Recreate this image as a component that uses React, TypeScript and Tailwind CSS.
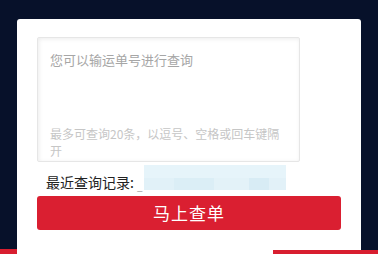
import React from "react";

export default function App() {
  return (
    <div
      className="relative w-[378px] h-[254px] overflow-hidden bg-[#07112a] pt-[19px] pl-[17px]"
      style={{ fontFamily: '"Noto Sans CJK SC", "Microsoft YaHei", sans-serif' }}
    >
      <div className="w-[344px] h-[235px] bg-white rounded-t-[3px] pt-[18px] pl-[20px]">
        <div className="relative w-[263px] h-[125px] border border-[#e6e6e6] rounded-[2px] shadow-[inset_1px_1px_4px_rgba(0,0,0,0.08)] flex flex-col justify-between pt-[13px] pb-[2px] pl-[12px] pr-[12px]">
          <div className="text-[13px] leading-[18px] text-[#a6a6a6]">您可以输运单号进行查询</div>
          <div className="text-[12px] leading-[17px] text-[#c6c6c6] pr-[4px]">
            最多可查询20条，以逗号、空格或回车键隔开
          </div>
        </div>
        <div className="flex items-center h-[34px] pl-[9px]">
          <span className="text-[14px] leading-[18px] text-[#222] mt-[6px]">最近查询记录:</span>
          <span className="text-[10px] text-[#999] mt-[12px] ml-[3px]">_</span>
          <div className="self-start mt-[3px] ml-[1px] w-[142px] h-[25px] blur-[0.6px] flex flex-col">
            <div className="flex-1 bg-[#e6f4fa]" />
            <div className="h-[12px] flex">
              <div className="w-[30px] bg-[#e1f1f8]" />
              <div className="w-[40px] bg-[#dbeef6]" />
              <div className="w-[35px] bg-[#e3f2f8]" />
              <div className="w-[20px] bg-[#d8ecf5]" />
              <div className="flex-1 bg-[#e2f1f8]" />
            </div>
          </div>
        </div>
        <button className="w-[304px] h-[34px] bg-[#da1f31] rounded-[3px] text-white text-[17px] tracking-[1px] flex items-center justify-center">
          马上查单
        </button>
      </div>
      <div className="absolute left-0 bottom-0 w-[17px] h-[5px] bg-[#d81e2f]" />
      <div className="absolute left-[273px] bottom-0 w-[105px] h-[4px] bg-[#d81e2f]" />
    </div>
  );
}
